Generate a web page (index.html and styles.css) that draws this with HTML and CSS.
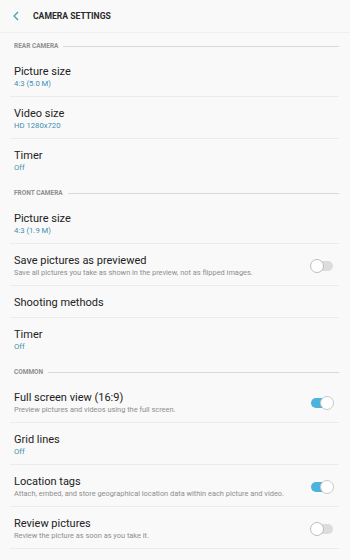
FILE: index.html
```html
<!DOCTYPE html>
<html lang="en">
<head>
    <meta charset="UTF-8">
    <meta name="viewport" content="width=device-width, initial-scale=1.0">
    <title>Camera Settings</title>
    <link rel="stylesheet" href="styles.css">
</head>
<body>
    <div class="header">
        <svg class="back" width="8" height="10" viewBox="0 0 8 10">
            <path d="M6 1 L2 5 L6 9" fill="none" stroke="#4a9ab5" stroke-width="1.3"/>
        </svg>
        <h1>CAMERA SETTINGS</h1>
    </div>

    <div class="section-label"><span>REAR CAMERA</span></div>
    <div class="item">
        <div class="text">
            <div class="title">Picture size</div>
            <div class="value">4:3 (5.0 M)</div>
        </div>
    </div>
    <div class="item">
        <div class="text">
            <div class="title">Video size</div>
            <div class="value">HD 1280x720</div>
        </div>
    </div>
    <div class="item last">
        <div class="text">
            <div class="title">Timer</div>
            <div class="value">Off</div>
        </div>
    </div>

    <div class="section-label"><span>FRONT CAMERA</span></div>
    <div class="item">
        <div class="text">
            <div class="title">Picture size</div>
            <div class="value">4:3 (1.9 M)</div>
        </div>
    </div>
    <div class="item">
        <div class="text">
            <div class="title">Save pictures as previewed</div>
            <div class="desc">Save all pictures you take as shown in the preview, not as flipped images.</div>
        </div>
        <div class="switch"></div>
    </div>
    <div class="item">
        <div class="text">
            <div class="title">Shooting methods</div>
        </div>
    </div>
    <div class="item last">
        <div class="text">
            <div class="title">Timer</div>
            <div class="value">Off</div>
        </div>
    </div>

    <div class="section-label"><span>COMMON</span></div>
    <div class="item">
        <div class="text">
            <div class="title">Full screen view (16:9)</div>
            <div class="desc">Preview pictures and videos using the full screen.</div>
        </div>
        <div class="switch on"></div>
    </div>
    <div class="item">
        <div class="text">
            <div class="title">Grid lines</div>
            <div class="value">Off</div>
        </div>
    </div>
    <div class="item">
        <div class="text">
            <div class="title">Location tags</div>
            <div class="desc">Attach, embed, and store geographical location data within each picture and video.</div>
        </div>
        <div class="switch on"></div>
    </div>
    <div class="item">
        <div class="text">
            <div class="title">Review pictures</div>
            <div class="desc">Review the picture as soon as you take it.</div>
        </div>
        <div class="switch"></div>
    </div>
</body>
</html>
```

FILE: styles.css
```css
* {
    margin: 0;
    padding: 0;
    box-sizing: border-box;
}

body {
    background: #f9f9f9;
    font-family: Roboto, "Liberation Sans", sans-serif;
    color: #222;
    overflow: hidden;
}

.header {
    display: flex;
    align-items: center;
    height: 33px;
    padding-left: 12px;
    border-bottom: 1px solid #efefef;
}

.back {
    margin-right: 13px;
}

.header h1 {
    font-size: 8.6px;
    font-weight: 700;
    color: #2a2a2a;
}

.section-label {
    display: flex;
    align-items: center;
    height: 22px;
    padding: 9px 11px 5px 14px;
}

.section-label span {
    font-size: 6.5px;
    font-weight: 700;
    color: #8f8f8f;
    margin-right: 5px;
}

.section-label::after {
    content: "";
    flex: 1;
    height: 1px;
    background: #d9d9d9;
}

.item {
    display: flex;
    align-items: center;
    margin: 0 11px 0 10px;
    padding: 10px 4px 7px 4px;
    border-bottom: 1px solid #ececec;
}

.item.last {
    border-bottom: none;
}

.text {
    flex: 1;
}

.title {
    font-size: 11px;
    line-height: 14px;
}

.value {
    font-size: 7.7px;
    line-height: 10px;
    color: #3d8fb3;
}

.desc {
    font-size: 7.4px;
    line-height: 10px;
    color: #8e8e8e;
}

.switch {
    position: relative;
    width: 22px;
    height: 10px;
    border-radius: 5px;
    background: #dcdcdc;
    margin-right: 2px;
}

.switch::after {
    content: "";
    position: absolute;
    top: -2px;
    left: -1px;
    width: 12px;
    height: 12px;
    border-radius: 50%;
    background: #fff;
    border: 1px solid #bdbdbd;
}

.switch.on {
    background: #4cb3dd;
}

.switch.on::after {
    left: auto;
    right: -1px;
    border-color: #c9c9c9;
}
```
